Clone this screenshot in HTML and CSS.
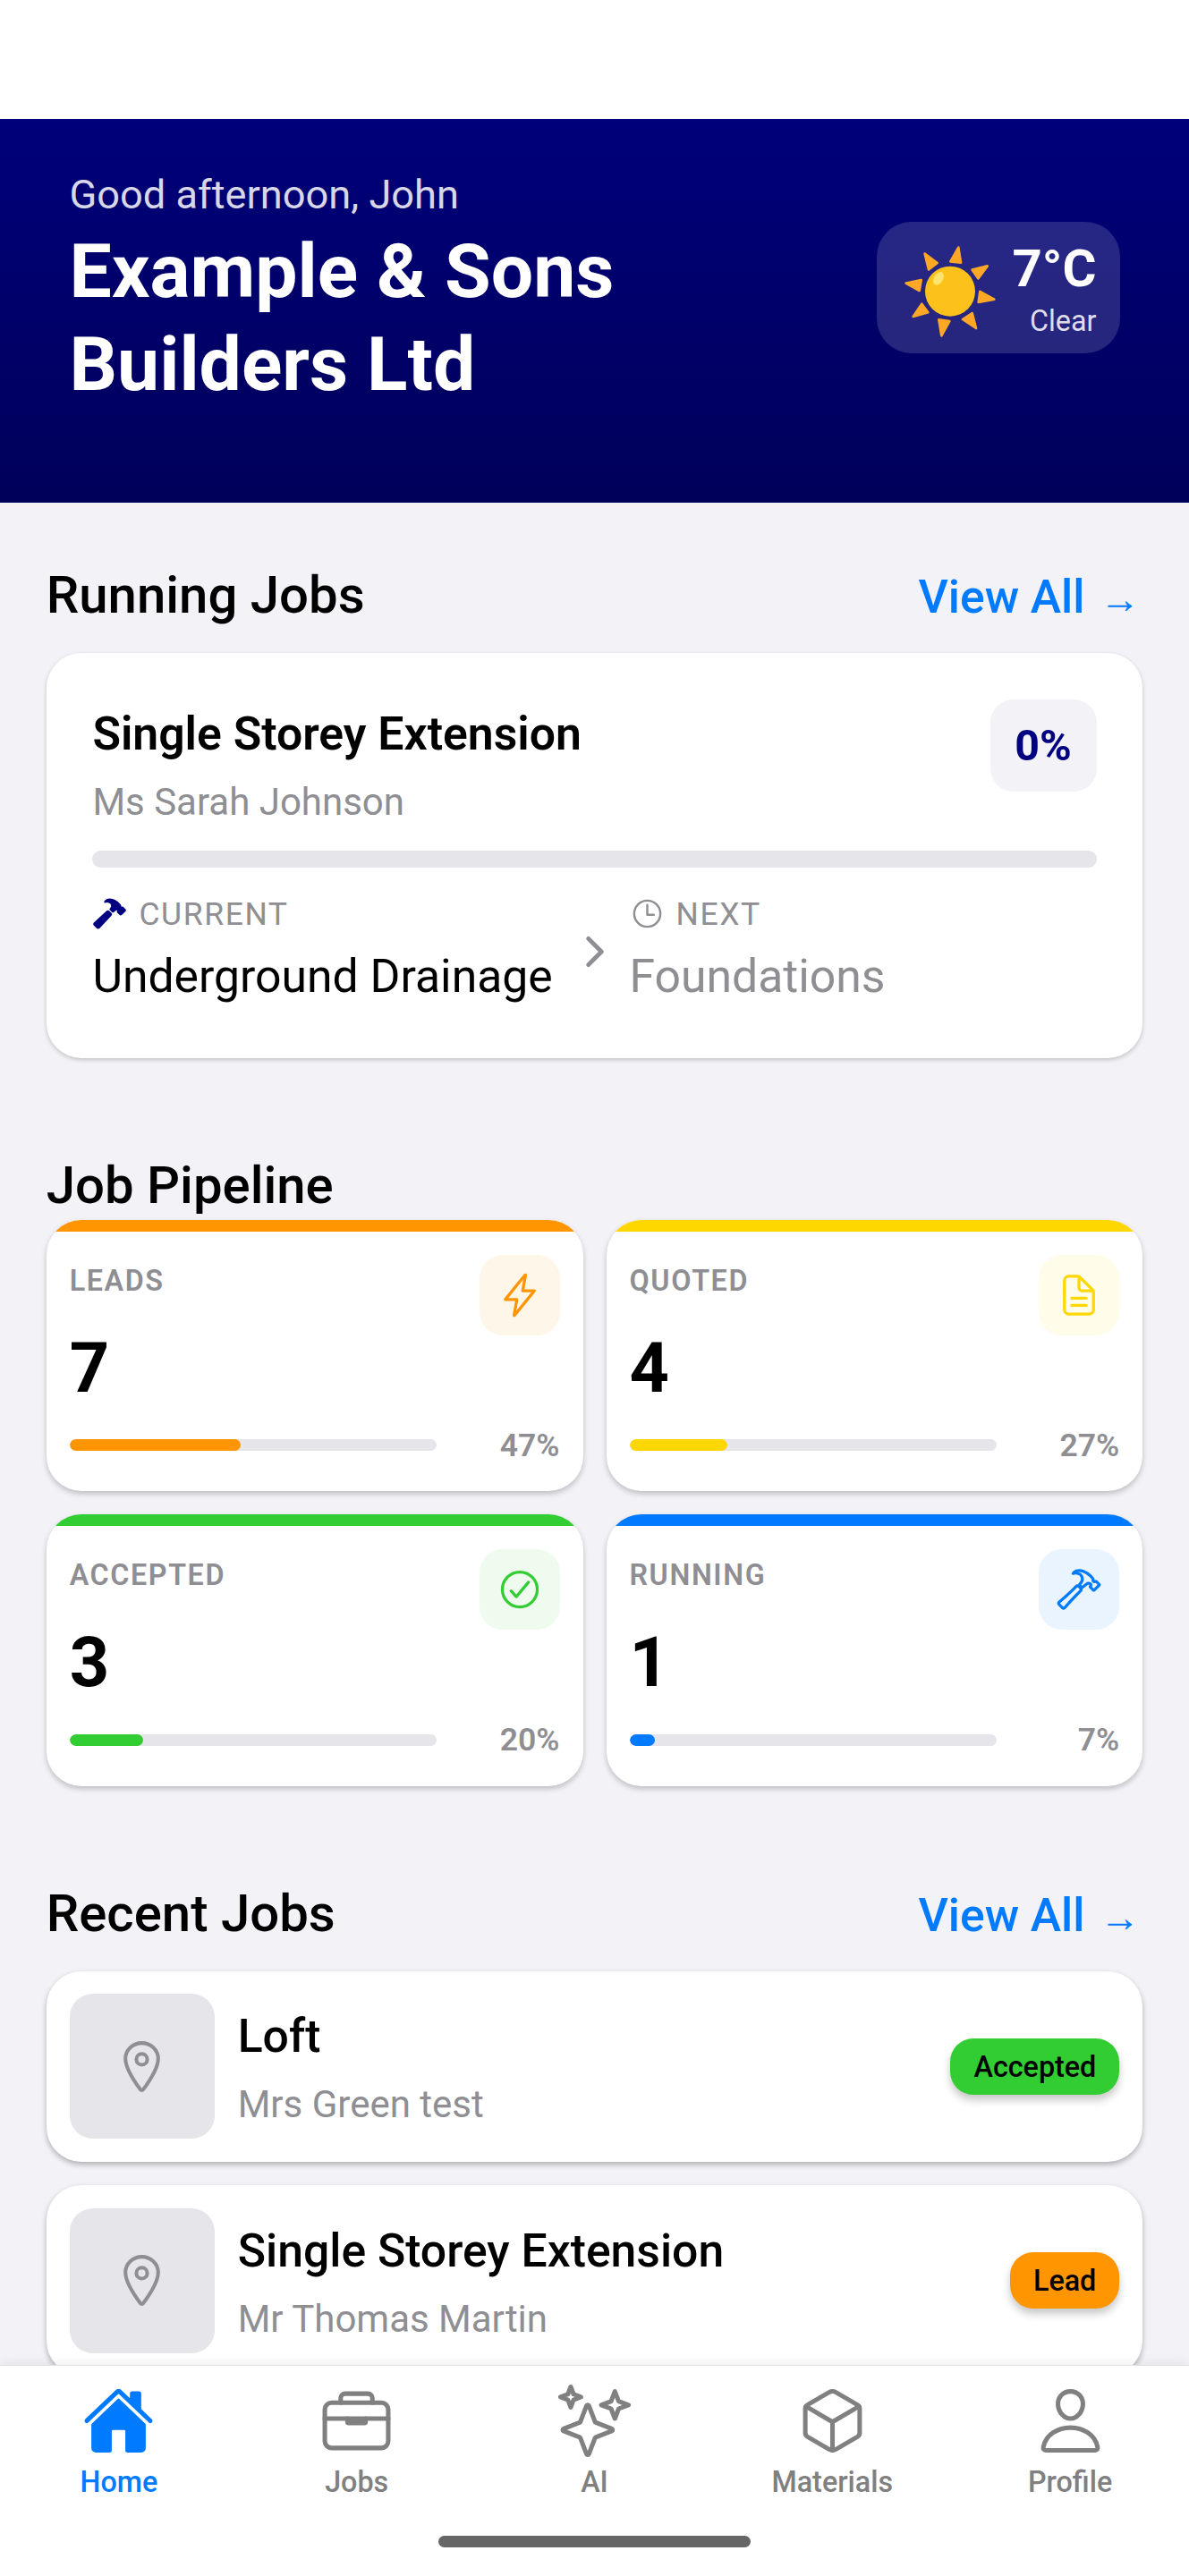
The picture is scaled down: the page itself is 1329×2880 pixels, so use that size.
FILE: index.html
```html
<!DOCTYPE html>
<html lang="en">
<head>
    <meta charset="UTF-8">
    <meta name="viewport" content="width=device-width, initial-scale=1.0">
    <title>Home</title>
    <link rel="stylesheet" href="styles.css">
</head>
<body>
    <div class="app">
        <div class="status-bar"></div>

        <div class="content">
            <!-- Header -->
            <div class="header">
                <div class="header-text">
                    <div class="greeting">Good afternoon, John</div>
                    <h1 class="company">Example &amp; Sons<br>Builders Ltd</h1>
                </div>
                <div class="weather">
                    <svg class="sun" viewBox="0 0 306 306">
                        <g fill="#ffa726" stroke="#ffa726" stroke-width="8" stroke-linejoin="round">
                            <path d="M181 5l-27 47 35 4z"/>
                            <path d="M278 67l-51 13 20 29z"/>
                            <path d="M301 179l-48-26-5 36z"/>
                            <path d="M240 276l-13-51-32 21z"/>
                            <path d="M124 301l-9-54 36 5z"/>
                            <path d="M29 237l29-43 21 29z"/>
                            <path d="M5 125l51-11-6 36z"/>
                            <path d="M68 26l42 31-29 22z"/>
                        </g>
                        <circle cx="153" cy="152" r="84" fill="#fcc21b"/>
                        <ellipse cx="114" cy="109" rx="15" ry="24" fill="#ffe36c" transform="rotate(30 114 109)"/>
                    </svg>
                    <div class="weather-info">
                        <div class="temp">7°C</div>
                        <div class="condition">Clear</div>
                    </div>
                </div>
            </div>

            <!-- Running jobs -->
            <div class="section">
                <div class="section-header">
                    <h2 class="section-title">Running Jobs</h2>
                    <a class="view-all">View All <span class="arrow">→</span></a>
                </div>
                <div class="running-card">
                    <div class="running-top">
                        <div class="running-info">
                            <div class="job-title">Single Storey Extension</div>
                            <div class="job-client">Ms Sarah Johnson</div>
                        </div>
                        <div class="percent-badge">0%</div>
                    </div>
                    <div class="progress-track"></div>
                    <div class="stages">
                        <div class="stage">
                            <div class="stage-label">
                                <svg class="icon-small navy" viewBox="0 0 512 512"><path fill="currentColor" d="M280.16 242.79l-26.11-26.12a32 32 0 00-45.14-.12L27.38 384.08c-6.61 6.23-10.95 14.17-11.35 23.06a32.11 32.11 0 009.21 23.94l39 39.43a.46.46 0 00.07.07A32.29 32.29 0 0087 480h1.18c8.89-.33 16.85-4.5 23.17-11.17l168.7-180.7a32 32 0 00.11-45.34zM490 190l-.31-.31-34.27-33.92a21.46 21.46 0 00-15.28-6.26 21.89 21.89 0 00-12.79 4.14c0-.43.06-.85.09-1.22.45-6.5 1.15-16.32-5.2-25.22a258 258 0 00-24.8-28.74.6.6 0 00-.08-.08c-13.32-13.12-42.31-37.83-86.72-55.94A139.55 139.55 0 00257.56 32C226 32 202 46.24 192.81 54.68a119.92 119.92 0 00-14.18 17.22 16 16 0 0018.65 24.34 74.45 74.45 0 018.58-2.63 63.46 63.46 0 0118.45-1.15c13.19 1.09 28.79 7.64 35.69 13.09 11.7 9.41 17.33 22.09 18.26 41.09.18 3.82-7.72 18.14-20 34.48a16 16 0 001.45 21l34.41 34.41a16 16 0 0022 .62c9.73-8.69 24.55-21.79 29.73-25 7.69-4.73 13.19-5.64 14.7-5.8a19.18 19.18 0 0111.29 2.38 1.24 1.24 0 01-.31.95l-1.82 1.9-.3.28a21.52 21.52 0 00.05 30.54l34.26 33.91a21.45 21.45 0 0015.28 6.25 21.7 21.7 0 0015.22-6.2l55.5-54.82c.19-.19.38-.39.56-.59A21.87 21.87 0 00490 190z"/></svg>
                                CURRENT
                            </div>
                            <div class="stage-name">Underground Drainage</div>
                        </div>
                        <svg class="chevron" viewBox="0 0 512 512"><path d="M184 112l144 144-144 144"/></svg>
                        <div class="stage next">
                            <div class="stage-label">
                                <svg class="icon-small line" viewBox="0 0 512 512"><path d="M256 64C150 64 64 150 64 256s86 192 192 192 192-86 192-192S362 64 256 64z"/><path d="M256 128v144h96"/></svg>
                                NEXT
                            </div>
                            <div class="stage-name">Foundations</div>
                        </div>
                    </div>
                </div>
            </div>

            <!-- Pipeline -->
            <div class="section">
                <h2 class="section-title">Job Pipeline</h2>
                <div class="pipeline-grid">
                    <div class="pipeline-card leads">
                        <div class="pipeline-top">
                            <div>
                                <div class="pipeline-label">LEADS</div>
                                <div class="pipeline-count">7</div>
                            </div>
                            <div class="pipeline-icon">
                                <svg class="line" viewBox="0 0 512 512"><path d="M315.27 33L96 304h128l-31.51 173.23a2.36 2.36 0 002.33 2.77h0a2.36 2.36 0 001.89-.95L416 208H288l31.66-173.25a2.45 2.45 0 00-2.44-2.75h0a2.42 2.42 0 00-1.95 1z"/></svg>
                            </div>
                        </div>
                        <div class="pipeline-bottom">
                            <div class="bar"><div class="bar-fill" style="width: 46.7%"></div></div>
                            <div class="pipeline-percent">47%</div>
                        </div>
                    </div>

                    <div class="pipeline-card quoted">
                        <div class="pipeline-top">
                            <div>
                                <div class="pipeline-label">QUOTED</div>
                                <div class="pipeline-count">4</div>
                            </div>
                            <div class="pipeline-icon">
                                <svg class="line" viewBox="0 0 512 512"><path d="M416 221.25V416a48 48 0 01-48 48H144a48 48 0 01-48-48V96a48 48 0 0148-48h98.75a32 32 0 0122.62 9.37l141.26 141.26a32 32 0 019.37 22.62z"/><path d="M256 56v120a32 32 0 0032 32h120M176 288h160M176 368h160"/></svg>
                            </div>
                        </div>
                        <div class="pipeline-bottom">
                            <div class="bar"><div class="bar-fill" style="width: 26.7%"></div></div>
                            <div class="pipeline-percent">27%</div>
                        </div>
                    </div>

                    <div class="pipeline-card accepted">
                        <div class="pipeline-top">
                            <div>
                                <div class="pipeline-label">ACCEPTED</div>
                                <div class="pipeline-count">3</div>
                            </div>
                            <div class="pipeline-icon">
                                <svg class="line" viewBox="0 0 512 512"><path d="M448 256c0-106-86-192-192-192S64 150 64 256s86 192 192 192 192-86 192-192z"/><path d="M352 176L217.6 336 160 272"/></svg>
                            </div>
                        </div>
                        <div class="pipeline-bottom">
                            <div class="bar"><div class="bar-fill" style="width: 20%"></div></div>
                            <div class="pipeline-percent">20%</div>
                        </div>
                    </div>

                    <div class="pipeline-card running">
                        <div class="pipeline-top">
                            <div>
                                <div class="pipeline-label">RUNNING</div>
                                <div class="pipeline-count">1</div>
                            </div>
                            <div class="pipeline-icon">
                                <svg class="line" viewBox="0 0 512 512"><path d="M277.42 247a24.68 24.68 0 00-4.08-5.47L255 223.44a21.63 21.63 0 00-6.56-4.57 20.93 20.93 0 00-23.28 4.27c-6.36 6.26-18 17.68-39 38.43C146 301.3 71.43 367.89 37.71 396.29a16 16 0 00-1.09 23.54l39 39.43a16.13 16.13 0 0023.67-.89c29.24-34.37 96.3-109 136-148.23 20.39-20.06 31.82-31.58 38.29-37.94a21.76 21.76 0 003.84-25.2zM478.43 201l-34.31-34a5.44 5.44 0 00-4-1.59 5.59 5.59 0 00-4 1.59h0a11.41 11.41 0 01-9.55 3.27c-4.48-.49-9.25-1.88-12.33-4.86-7-6.86 1.09-20.36-5.07-29a242.88 242.88 0 00-23.08-26.72c-7.06-7-34.81-33.47-81.55-52.53a123.79 123.79 0 00-47-9.24c-26.35 0-46.61 11.76-54 18.51-5.88 5.32-12 13.77-12 13.77a91.29 91.29 0 0110.81-3.2 79.53 79.53 0 0123.28-1.49C241.19 76.8 259.94 84.1 270 92c16.21 13 23.18 30.39 24.27 52.83.8 16.69-15.23 37.76-30.44 54.94a7.85 7.85 0 00.4 10.83l21.24 21.23a8 8 0 0011.14.1c13.93-13.51 31.09-28.47 40.82-34.46s17.58-7.68 21.35-8.09a35.71 35.71 0 0121.3 4.62 13.65 13.65 0 013.08 2.38c6.46 6.56 6.07 17.28-.5 23.74l-2 1.89a5.5 5.5 0 000 7.84l34.31 34a5.5 5.5 0 004 1.58 5.65 5.65 0 004-1.58L478.43 209a5.82 5.82 0 000-8z"/></svg>
                            </div>
                        </div>
                        <div class="pipeline-bottom">
                            <div class="bar"><div class="bar-fill" style="width: 6.9%"></div></div>
                            <div class="pipeline-percent">7%</div>
                        </div>
                    </div>
                </div>
            </div>

            <!-- Recent jobs -->
            <div class="section">
                <div class="section-header">
                    <h2 class="section-title">Recent Jobs</h2>
                    <a class="view-all">View All <span class="arrow">→</span></a>
                </div>
                <div class="recent-list">
                    <div class="recent-card">
                        <div class="thumb">
                            <svg class="line" viewBox="0 0 512 512"><path d="M256 48c-79.5 0-144 61.39-144 137 0 87 96 224.87 131.25 272.49a15.77 15.77 0 0025.5 0C304 409.89 400 272.07 400 185c0-75.61-64.5-137-144-137z"/><circle cx="256" cy="192" r="48"/></svg>
                        </div>
                        <div class="recent-info">
                            <div class="job-title">Loft</div>
                            <div class="job-client">Mrs Green test</div>
                        </div>
                        <div class="status status-accepted">Accepted</div>
                    </div>
                    <div class="recent-card">
                        <div class="thumb">
                            <svg class="line" viewBox="0 0 512 512"><path d="M256 48c-79.5 0-144 61.39-144 137 0 87 96 224.87 131.25 272.49a15.77 15.77 0 0025.5 0C304 409.89 400 272.07 400 185c0-75.61-64.5-137-144-137z"/><circle cx="256" cy="192" r="48"/></svg>
                        </div>
                        <div class="recent-info">
                            <div class="job-title">Single Storey Extension</div>
                            <div class="job-client">Mr Thomas Martin</div>
                        </div>
                        <div class="status status-lead">Lead</div>
                    </div>
                </div>
            </div>
        </div>

        <!-- Bottom navigation -->
        <div class="tab-bar">
            <div class="tabs">
                <div class="tab active">
                    <svg viewBox="0 0 512 512" fill="currentColor"><path d="M261.56 101.28a8 8 0 00-11.06 0L66.4 277.15a8 8 0 00-2.47 5.79L63.9 448a32 32 0 0032 32H192a16 16 0 0016-16V328a8 8 0 018-8h80a8 8 0 018 8v136a16 16 0 0016 16h96.06a32 32 0 0032-32V282.94a8 8 0 00-2.47-5.79z"/><path d="M490.91 244.15l-74.8-71.56V64a16 16 0 00-16-16h-48a16 16 0 00-16 16v32l-57.92-55.38C272.77 35.14 264.71 32 256 32c-8.68 0-16.72 3.14-22.14 8.63l-212.7 203.5c-6.22 6-7 15.87-1.34 22.37A16 16 0 0043 267.56L250.5 69.28a8 8 0 0111.06 0l207.52 198.28a16 16 0 0022.59-.44c6.14-6.36 5.63-16.86-.76-22.97z"/></svg>
                    <span>Home</span>
                </div>
                <div class="tab">
                    <svg class="line" viewBox="0 0 512 512"><rect x="32" y="128" width="448" height="320" rx="48" ry="48"/><path d="M144 128V96a32 32 0 0132-32h160a32 32 0 0132 32v32M480 240H32"/><path d="M320 240v24a8 8 0 01-8 8H200a8 8 0 01-8-8v-24" fill="currentColor"/></svg>
                    <span>Jobs</span>
                </div>
                <div class="tab">
                    <svg class="line" viewBox="0 0 512 512"><path d="M259.92 262.91L216.4 149.77a9 9 0 00-16.8 0l-43.52 113.14a9 9 0 01-5.17 5.17L37.77 311.6a9 9 0 000 16.8l113.14 43.52a9 9 0 015.17 5.17l43.52 113.14a9 9 0 0016.8 0l43.52-113.14a9 9 0 015.17-5.17l113.14-43.52a9 9 0 000-16.8l-113.14-43.52a9 9 0 01-5.17-5.17zM108 68L88 16 68 68 16 88l52 20 20 52 20-52 52-20-52-20zM426.67 117.33L400 48l-26.67 69.33L304 144l69.33 26.67L400 240l26.67-69.33L496 144l-69.33-26.67z"/></svg>
                    <span>AI</span>
                </div>
                <div class="tab">
                    <svg class="line" viewBox="0 0 512 512"><path d="M448 341.37V170.61A32 32 0 00432.11 143l-152-88.46a47.94 47.94 0 00-48.24 0L79.89 143A32 32 0 0064 170.61v170.76A32 32 0 0079.89 369l152 88.46a48 48 0 0048.24 0l152-88.46A32 32 0 00448 341.37z"/><path d="M69 153.99l187 110 187-110M256 463.99v-200"/></svg>
                    <span>Materials</span>
                </div>
                <div class="tab">
                    <svg class="line" viewBox="0 0 512 512"><path d="M344 144c-3.92 52.87-44 96-88 96s-84.15-43.12-88-96c-4-55 35-96 88-96s92 42 88 96z"/><path d="M256 304c-87 0-175.3 48-191.64 138.6C62.39 453.52 68.57 464 80 464h352c11.44 0 17.62-10.48 15.65-21.4C431.3 352 343 304 256 304z"/></svg>
                    <span>Profile</span>
                </div>
            </div>
            <div class="home-indicator"></div>
        </div>
    </div>
</body>
</html>
```

FILE: styles.css
```css
* {
    margin: 0;
    padding: 0;
    box-sizing: border-box;
}

body {
    font-family: Roboto, "Liberation Sans", sans-serif;
    background: #f2f2f7;
    color: #000;
}

.app {
    width: 1329px;
    height: 2880px;
    display: flex;
    flex-direction: column;
    overflow: hidden;
}

.status-bar {
    height: 133px;
    flex-shrink: 0;
    background: #fff;
}

.content {
    flex: 1;
    min-height: 0;
    overflow: hidden;
}

svg {
    display: block;
    flex-shrink: 0;
}

.line {
    fill: none;
    stroke: currentColor;
    stroke-width: 32;
    stroke-linecap: round;
    stroke-linejoin: round;
}

/* Header */
.header {
    height: 429px;
    padding: 52px 77.5px 0;
    display: flex;
    justify-content: space-between;
    align-items: flex-start;
    background: linear-gradient(180deg, #00007a, #00005a);
    color: #fff;
}

.greeting {
    font-size: 45.2px;
    line-height: 66px;
    margin-bottom: 1px;
    color: rgba(255, 255, 255, 0.85);
}

.company {
    font-size: 84px;
    line-height: 103.5px;
    font-weight: 700;
}

.weather {
    width: 272px;
    height: 147px;
    margin-top: 63px;
    padding: 0 26px 0 31px;
    display: flex;
    align-items: center;
    justify-content: space-between;
    background: rgba(255, 255, 255, 0.15);
    border-radius: 39px;
}

.sun {
    width: 102px;
    height: 102px;
    margin-top: 8px;
}

.weather-info {
    text-align: right;
}

.temp {
    font-size: 58.1px;
    line-height: 70px;
    font-weight: 700;
    margin-bottom: 5px;
}

.condition {
    font-size: 32.3px;
    line-height: 39px;
    color: rgba(255, 255, 255, 0.85);
}

/* Sections */
.section {
    padding: 0 51.7px;
    margin-bottom: 107.5px;
}

.header + .section {
    margin-top: 68px;
}

.section-header {
    display: flex;
    justify-content: space-between;
    align-items: baseline;
    height: 70px;
    margin-bottom: 29.5px;
}

.section-title {
    font-size: 58.1px;
    line-height: 70px;
    font-weight: 500;
}

.view-all {
    font-size: 51.7px;
    line-height: 62px;
    font-weight: 500;
    color: #007aff;
}

.arrow {
    margin: 0 3px 0 4px;
    font-size: 45px;
    font-weight: 400;
    line-height: 1;
}

.job-title {
    font-size: 51.7px;
    line-height: 62px;
    font-weight: 500;
    margin-bottom: 20px;
}

.job-client {
    font-size: 42px;
    line-height: 50px;
    color: #8e8e93;
}

/* Running job card */
.running-card {
    height: 453px;
    padding: 52px 51.7px 0;
    background: #fff;
    border-radius: 39px;
    box-shadow: 0 2px 5px rgba(0, 0, 0, 0.2);
}

.running-top {
    display: flex;
    justify-content: space-between;
    align-items: flex-start;
}

.running-info {
    padding-top: 8px;
}

.running-info .job-title {
    font-weight: 600;
}

.percent-badge {
    width: 119px;
    text-align: center;
    line-height: 103px;
    font-size: 48.4px;
    font-weight: 700;
    color: #000080;
    background: #f2f2f7;
    border-radius: 26px;
}

.progress-track {
    height: 19px;
    margin: 29px 0 30px;
    background: #e5e5ea;
    border-radius: 10px;
}

.stages {
    display: flex;
    align-items: center;
    gap: 13px;
}

.stage {
    flex: 1;
}

.stage-label {
    display: flex;
    align-items: center;
    gap: 13px;
    margin-bottom: 17px;
    font-size: 35.5px;
    line-height: 44px;
    letter-spacing: 1.6px;
    color: #8e8e93;
}

.icon-small {
    width: 39px;
    height: 39px;
}

.navy {
    color: #000080;
}

.stage-name {
    font-size: 51.7px;
    line-height: 62px;
    white-space: nowrap;
}

.next .stage-name {
    color: #8e8e93;
}

.chevron {
    width: 52px;
    height: 52px;
    margin-top: 5px;
    fill: none;
    stroke: #8e8e93;
    stroke-width: 48;
    stroke-linecap: round;
    stroke-linejoin: round;
}

/* Pipeline */
.pipeline-grid {
    display: grid;
    grid-template-columns: 1fr 1fr;
    gap: 26px;
    margin-top: 3.5px;
}

.pipeline-card {
    height: 303.5px;
    overflow: hidden;
    background: #fff;
    border-radius: 39px;
    box-shadow: 0 3px 6px rgba(0, 0, 0, 0.22);
}

.pipeline-card::before {
    content: "";
    display: block;
    height: 13px;
    background: currentColor;
}

.leads {
    color: #ff9500;
}

.quoted {
    color: #ffd700;
}

.accepted {
    color: #32cd32;
}

.running {
    color: #007aff;
}

.pipeline-top {
    display: flex;
    justify-content: space-between;
    align-items: flex-start;
    height: 199px;
    padding: 26px 26px 0;
}

.pipeline-label {
    margin: 8px 0 31px;
    font-size: 32.3px;
    line-height: 42px;
    font-weight: 600;
    letter-spacing: 1.6px;
    color: #8e8e93;
}

.pipeline-count {
    font-size: 77.5px;
    line-height: 92px;
    font-weight: 700;
    color: #000;
}

.pipeline-icon {
    width: 90px;
    height: 90px;
    display: flex;
    align-items: center;
    justify-content: center;
    border-radius: 26px;
}

.pipeline-icon svg {
    width: 52px;
    height: 52px;
}

.leads .pipeline-icon {
    background: #ff950015;
}

.quoted .pipeline-icon {
    background: #ffd70015;
}

.accepted .pipeline-icon {
    background: #32cd3215;
}

.running .pipeline-icon {
    background: #007aff15;
}

.pipeline-bottom {
    display: flex;
    align-items: center;
    justify-content: space-between;
    padding: 18px 26px 0;
}

.bar {
    width: 410px;
    height: 13px;
    background: #e5e5ea;
    border-radius: 6.5px;
    overflow: hidden;
}

.bar-fill {
    height: 100%;
    background: currentColor;
    border-radius: 6.5px;
}

.pipeline-percent {
    font-size: 35.5px;
    line-height: 44px;
    font-weight: 600;
    color: #8e8e93;
}

/* Recent jobs */
.recent-list {
    display: flex;
    flex-direction: column;
    gap: 26px;
}

.recent-card {
    height: 213.4px;
    flex-shrink: 0;
    display: flex;
    align-items: center;
    padding: 0 26px;
    background: #fff;
    border-radius: 39px;
    box-shadow: 0 3px 6px rgba(0, 0, 0, 0.28);
}

.thumb {
    width: 162px;
    height: 162px;
    margin-right: 26px;
    display: flex;
    align-items: center;
    justify-content: center;
    color: #8e8e93;
    background: #e5e5ea;
    border-radius: 26px;
}

.thumb svg {
    width: 65px;
    height: 65px;
}

.recent-info {
    flex: 1;
    padding-top: 4px;
}

.status {
    padding: 1px 26px 0;
    font-size: 32.3px;
    line-height: 62px;
    font-weight: 500;
    border-radius: 26px;
    box-shadow: 0 6px 10px rgba(0, 0, 0, 0.22);
}

.status-accepted {
    background: #32cd32;
}

.status-lead {
    background: #ff9500;
}

/* Bottom navigation */
.tab-bar {
    position: relative;
    height: 236px;
    flex-shrink: 0;
    background: #fff;
    border-top: 1px solid #e0e0e0;
    box-shadow: 0 -3px 12px rgba(0, 0, 0, 0.06);
}

.tabs {
    display: flex;
    padding-top: 21px;
}

.tab {
    flex: 1;
    display: flex;
    flex-direction: column;
    align-items: center;
    gap: 9px;
    color: #808080;
    font-size: 32.3px;
    line-height: 38px;
    font-weight: 500;
}

.tab svg {
    width: 81px;
    height: 81px;
}

.tab.active {
    color: #007aff;
}

.home-indicator {
    width: 349px;
    height: 13px;
    margin: 41px auto 0;
    background: #666;
    border-radius: 6.5px;
}
```
